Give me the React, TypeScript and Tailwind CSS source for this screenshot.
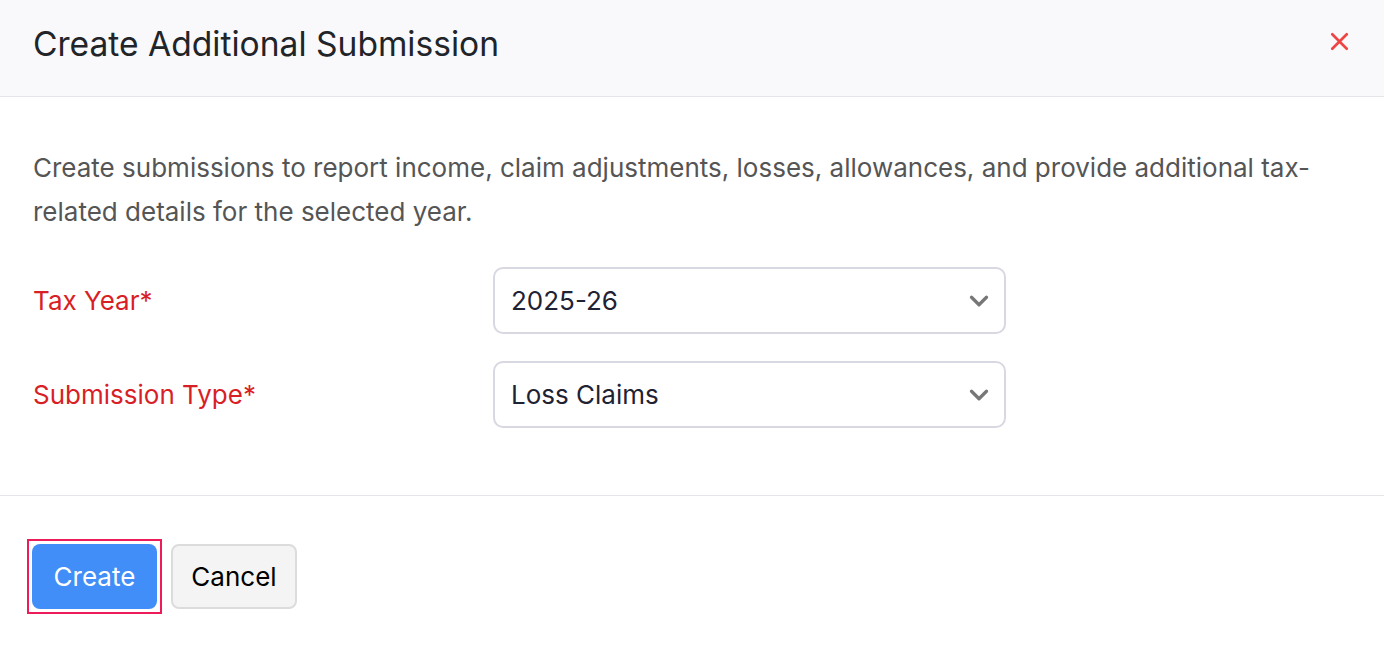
import { ChevronDown, X } from 'lucide-react'

const fieldRows = [
  { label: 'Tax Year*', value: '2025-26' },
  { label: 'Submission Type*', value: 'Loss Claims' },
]

export default function App() {
  return (
    <div className="w-[1384px] h-[648px] bg-white font-['Inter','Noto_Sans',sans-serif] overflow-hidden">
      <div className="h-[97px] px-[33px] pb-[7px] flex items-center justify-between bg-[#f9f9fb] border-b border-[#e6e6ea]">
        <h1 className="text-[33.6px] text-[#212529]">Create Additional Submission</h1>
        <button className="text-[#ef4444] -mr-[3px] -mt-[6px]">
          <X size={29} strokeWidth={2.2} />
        </button>
      </div>

      <div className="px-[33px] pt-[49px] pb-[67px] border-b border-[#e6e6ea]">
        <p className="text-[26px] leading-[44px] text-[#555555]">
          Create submissions to report income, claim adjustments, losses, allowances, and provide additional tax-related details for the selected year.
        </p>

        <div className="mt-[33px] flex flex-col gap-[27px]">
          {fieldRows.map((row) => (
            <div key={row.label} className="flex items-center">
              <label className="w-[460px] text-[26px] text-[#d91f26]">{row.label}</label>
              <div className="w-[513px] h-[67px] rounded-[10px] border-2 border-[#d8d8e2] pl-[16px] pr-[10px] flex items-center justify-between">
                <span className="text-[26px] text-[#1f2233]">{row.value}</span>
                <ChevronDown size={30} strokeWidth={2.6} className="text-[#777777]" />
              </div>
            </div>
          ))}
        </div>
      </div>

      <div className="pl-[32px] pt-[48px] flex gap-[14px]">
        <span className="inline-flex outline-2 outline-offset-[3px] outline-[#ee1b5b]">
          <button className="w-[125px] h-[65px] rounded-[8px] bg-[#428ef8] text-white text-[26px]">
            Create
          </button>
        </span>
        <button className="w-[126px] h-[65px] rounded-[8px] bg-[#f4f4f4] border-2 border-[#dcdcdc] text-black text-[26px]">
          Cancel
        </button>
      </div>
    </div>
  )
}
